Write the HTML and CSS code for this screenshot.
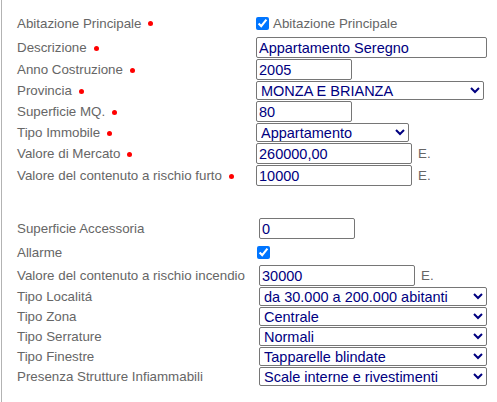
FILE: index.html
```html
<!DOCTYPE html>
<html>
<head>
<meta charset="utf-8">
<link rel="stylesheet" href="styles.css">
</head>
<body>
<div class="panel">
  <div class="form form-a">
    <div class="lbl">Abitazione Principale<span class="req"></span></div>
    <div class="chk-row top"><input type="checkbox" checked><span class="chk-text">Abitazione Principale</span></div>

    <div class="lbl">Descrizione<span class="req"></span></div>
    <div class="fld"><input class="txt w231" type="text" value="Appartamento Seregno"></div>

    <div class="lbl">Anno Costruzione<span class="req"></span></div>
    <div class="fld"><input class="txt w96" type="text" value="2005"></div>

    <div class="lbl">Provincia<span class="req"></span></div>
    <div class="fld"><select class="sel w228"><option>MONZA E BRIANZA</option></select></div>

    <div class="lbl">Superficie MQ.<span class="req"></span></div>
    <div class="fld"><input class="txt w96" type="text" value="80"></div>

    <div class="lbl">Tipo Immobile<span class="req"></span></div>
    <div class="fld"><select class="sel w153"><option>Appartamento</option></select></div>

    <div class="lbl">Valore di Mercato<span class="req"></span></div>
    <div class="fld"><input class="txt w156" type="text" value="260000,00"><span class="unit">E.</span></div>

    <div class="lbl">Valore del contenuto a rischio furto<span class="req"></span></div>
    <div class="fld"><input class="txt w156" type="text" value="10000"><span class="unit">E.</span></div>
  </div>

  <div class="form form-b">
    <div class="lbl">Superficie Accessoria</div>
    <div class="fld"><input class="txt w96" type="text" value="0"></div>

    <div class="lbl">Allarme</div>
    <div class="chk-row mid"><input type="checkbox" checked></div>

    <div class="lbl">Valore del contenuto a rischio incendio</div>
    <div class="fld"><input class="txt w156" type="text" value="30000"><span class="unit">E.</span></div>

    <div class="lbl">Tipo Localitá</div>
    <div class="fld"><select class="sel w228"><option>da 30.000 a 200.000 abitanti</option></select></div>

    <div class="lbl">Tipo Zona</div>
    <div class="fld"><select class="sel w228"><option>Centrale</option></select></div>

    <div class="lbl">Tipo Serrature</div>
    <div class="fld"><select class="sel w228"><option>Normali</option></select></div>

    <div class="lbl">Tipo Finestre</div>
    <div class="fld"><select class="sel w228"><option>Tapparelle blindate</option></select></div>

    <div class="lbl">Presenza Strutture Infiammabili</div>
    <div class="fld"><select class="sel w228"><option>Scale interne e rivestimenti</option></select></div>
  </div>
</div>
</body>
</html>
```

FILE: styles.css
```css
html, body {
  margin: 0;
  padding: 0;
  background: #fff;
}
body {
  font-family: "Liberation Sans", Arial, sans-serif;
  font-size: 13.33px;
  color: #666;
}
.panel {
  margin-left: 1px;
  border-left: 1px solid #b3b3b3;
  padding: 10px 0 0 15px;
  height: 392px;
}
.form {
  display: grid;
  row-gap: 1px;
  align-items: center;
}
.form-a {
  grid-template-columns: 239px 1fr;
}
.form-b {
  grid-template-columns: 242px 1fr;
  margin-top: 32px;
}
.lbl {
  white-space: nowrap;
  display: flex;
  align-items: center;
}
.req {
  display: inline-block;
  width: 5px;
  height: 5px;
  border-radius: 50%;
  background: #f00;
  margin-left: 7px;
  margin-top: 1px;
}
.fld {
  display: flex;
  align-items: center;
}
.chk-row {
  display: flex;
  align-items: center;
}
.chk-row.top { height: 26px; }
.chk-row.mid { height: 24px; }
.chk-row input {
  width: 13px;
  height: 13px;
  margin: 0;
}
.chk-row.mid input { margin-left: -2px; }
.chk-text {
  margin-left: 4px;
}
.txt {
  box-sizing: border-box;
  height: 21px;
  padding: 1px 2px;
  margin: 0;
  border: 1px solid #767676;
  border-radius: 2px;
  font-family: "Liberation Sans", Arial, sans-serif;
  font-size: 14.5px;
  color: #000080;
  background: #fff;
}
.sel {
  box-sizing: border-box;
  height: 19px;
  padding: 0;
  margin: 0;
  border: 1px solid #767676;
  border-radius: 2px;
  font-family: "Liberation Sans", Arial, sans-serif;
  font-size: 14.5px;
  color: #000080;
  background: #fff;
}
.unit {
  margin-left: 6px;
  color: #666;
}
.w96 { width: 96px; }
.w153 { width: 153px; }
.w156 { width: 156px; }
.w228 { width: 228px; }
.w231 { width: 231px; }
```
